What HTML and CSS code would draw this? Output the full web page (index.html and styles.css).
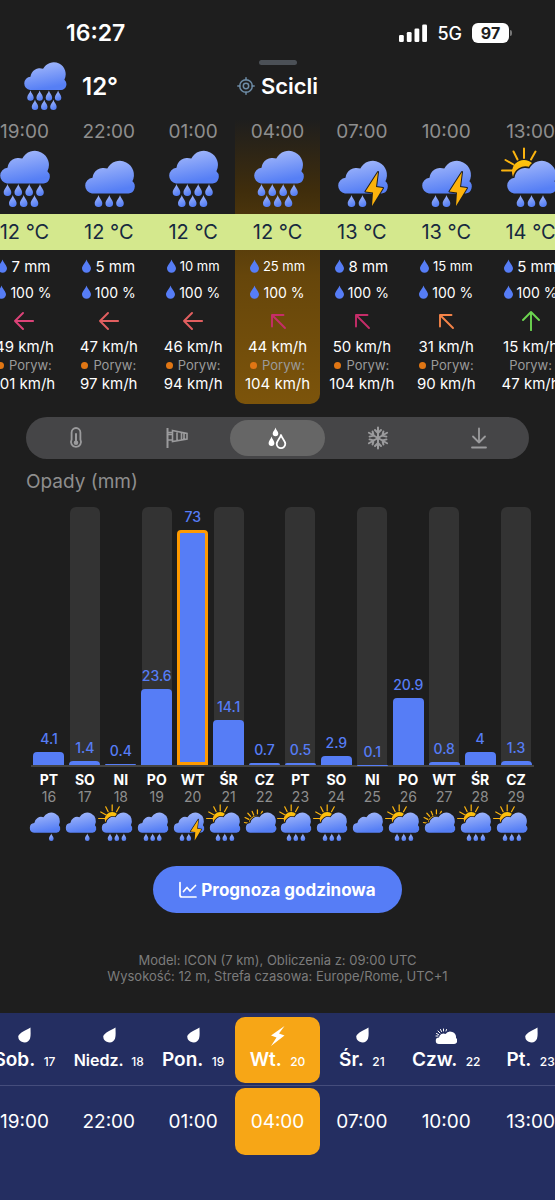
FILE: index.html
```
<!DOCTYPE html>
<html lang="pl">
<head>
	<meta charset="UTF-8">
	<meta name="viewport" content="width=device-width, initial-scale=1">
	<title>Scicli - prognoza pogody</title>
	<link rel="stylesheet" href="styles.css">
</head>
<body>
	<!-- icon sprite -->
	<svg class="sprite" aria-hidden="true">
		<defs>
			<linearGradient id="blue" x1="0" y1="0" x2="0.3" y2="1">
				<stop offset="0" stop-color="#abbefb"/>
				<stop offset="1" stop-color="#567ff5"/>
			</linearGradient>
			<linearGradient id="sunfill" x1="0" y1="0" x2="0" y2="1">
				<stop offset="0" stop-color="#fdc50c"/>
				<stop offset="1" stop-color="#fb9f10"/>
			</linearGradient>
			<path id="cloud" d="M8 33.5A7.9 7.9 0 0 1 8.5 17.8A11 11 0 0 1 23.3 8.6A13.8 13.8 0 1 1 48.4 21.3A7 7 0 0 1 44.5 33.5Z" fill="url(#blue)"/>
			<path id="drip" d="M0 0C.8 3.3 3.8 5.3 3.8 8.2A3.8 3.8 0 0 1-3.8 8.2C-3.8 5.3-.8 3.3 0 0Z" fill="url(#blue)"/>
			<g id="sun">
				<path d="M-4 10.5H7M-.5 0L7.500 4.500M7.500-8.500L11.500-.5M18-11.500V-2M29.500-8.500L25-.5" fill="none" stroke="#fbb40f" stroke-width="2" stroke-linecap="round"/>
				<circle cx="18" cy="12" r="12" fill="url(#sunfill)"/>
			</g>
			<path id="bolt" d="M41 12L28.500 31.500L36 32.500L35 46L46 28L39 27Z" fill="#fcb20c" stroke="#1e1e1e" stroke-width="2" stroke-linejoin="round" paint-order="stroke"/>
		</defs>
		<symbol id="w-heavy" viewBox="-5 -13 60 60">
			<use href="#cloud" y="-10"/>
			<use href="#drip" x="8.500" y="24"/><use href="#drip" x="19.300" y="24"/><use href="#drip" x="30.200" y="24"/><use href="#drip" x="41" y="24"/>
			<use href="#drip" x="13.800" y="35"/><use href="#drip" x="24.700" y="35"/><use href="#drip" x="35.500" y="35"/>
		</symbol>
		<symbol id="w-rain" viewBox="-5 -13 60 60">
			<use href="#cloud"/>
			<use href="#drip" x="14.500" y="35"/><use href="#drip" x="25.300" y="35"/><use href="#drip" x="36" y="35"/>
		</symbol>
		<symbol id="w-drizzle" viewBox="-5 -13 60 60">
			<use href="#cloud"/><use href="#drip" x="36" y="35"/>
		</symbol>
		<symbol id="w-cloud" viewBox="-5 -13 60 60">
			<use href="#cloud"/>
		</symbol>
		<symbol id="w-storm" viewBox="-5 -13 60 60">
			<use href="#cloud"/>
			<use href="#drip" x="14.500" y="35"/><use href="#drip" x="25.500" y="35"/>
			<use href="#bolt"/>
		</symbol>
		<symbol id="w-sunrain" viewBox="-5 -13 60 60">
			<use href="#sun"/>
			<use href="#cloud" stroke="#1e1e1e" stroke-width="3" paint-order="stroke"/>
			<use href="#drip" x="14.500" y="35"/><use href="#drip" x="25.500" y="35"/><use href="#drip" x="37" y="35"/>
		</symbol>
		<symbol id="w-suncloud" viewBox="-5 -13 60 60">
			<path d="M-1 17L4 18M0 9L6 12M4.500 2L9 7M11.500-1L14 5M20-3.500V3M28-1L26 3" fill="none" stroke="#fbb40f" stroke-width="2" stroke-linecap="round"/>
			<circle cx="18" cy="18" r="11" fill="none" stroke="#fbb40f" stroke-width="2"/>
			<use href="#cloud" stroke="#1e1e1e" stroke-width="3" paint-order="stroke"/>
		</symbol>
		<symbol id="drop" viewBox="0 0 9 14">
			<path d="M4.500 0.500C5.200 3.500 9 6.500 9 9.300A4.500 4.500 0 0 1 0 9.300C0 6.500 3.800 3.500 4.500 0.500Z" fill="#567df6"/>
		</symbol>
		<symbol id="a-left" viewBox="0 0 20 20">
			<path d="M19.200 10H1M9 2L1 10L9 18" fill="none" stroke="currentColor" stroke-width="1.900" stroke-linecap="round" stroke-linejoin="round"/>
		</symbol>
		<symbol id="a-nw" viewBox="0 0 20 20">
			<path d="M17 17L4 4M15.500 4H4V15.500" fill="none" stroke="currentColor" stroke-width="1.900" stroke-linecap="round" stroke-linejoin="round"/>
		</symbol>
		<symbol id="a-up" viewBox="0 0 20 20">
			<path d="M10 19.200V1M2 9L10 1L18 9" fill="none" stroke="currentColor" stroke-width="1.900" stroke-linecap="round" stroke-linejoin="round"/>
		</symbol>
		<symbol id="n-drop" viewBox="0 0 22 20">
			<path d="M17.500 1.500C17.500 6 18 9 17 12.800A6.200 6.200 0 0 1 5.200 10.500C6.500 6.500 12 5 17.500 1.500Z" fill="currentColor"/>
		</symbol>
		<symbol id="n-bolt" viewBox="0 0 22 20">
			<path d="M17.500 0L4 9.500L9.500 11.500L4 20L17.500 9.500L12 7.500Z" fill="currentColor"/>
		</symbol>
		<symbol id="n-cloud" viewBox="0 0 22 20">
			<path d="M1 10H3M1.500 7.500L3.500 8.500M3 5L5 7M5.500 3.500L6.500 5.500M8.500 3V5M11.500 3.500L11 5" stroke="currentColor" stroke-width="1" stroke-linecap="round"/>
			<path d="M4 18A3.200 3.200 0 0 1 4 11.500A4.500 4.500 0 0 1 10.500 8A5.800 5.800 0 0 1 21 12A3.300 3.300 0 0 1 19 18Z" fill="currentColor"/>
		</symbol>
	</svg>

	<div class="status">
		<span class="clock">16:27</span>
		<div class="system">
			<svg class="signal" viewBox="0 0 28 18" fill="#fff">
				<rect x="0" y="11" width="4.800" height="7" rx="1.300"/>
				<rect x="7.800" y="8" width="4.800" height="10" rx="1.300"/>
				<rect x="15.500" y="4.500" width="4.800" height="13.500" rx="1.300"/>
				<rect x="23.200" y="0.500" width="4.800" height="17.500" rx="1.300"/>
			</svg>
			<span class="network">5G</span>
			<span class="battery">97</span>
		</div>
	</div>

	<header class="header">
		<div class="now">
			<svg><use href="#w-heavy"/></svg>
			<span>12°</span>
		</div>
		<div class="place">
			<div class="handle"></div>
			<h1>
				<svg viewBox="0 0 18 18" fill="none" stroke="#6d8ca6" stroke-width="1.500" stroke-linecap="round">
					<circle cx="9" cy="9" r="6.300"/><circle cx="9" cy="9" r="2.700"/>
					<path d="M9 .8V3M9 15V17.200M.8 9H3M15 9H17.200"/>
				</svg>
				Scicli
			</h1>
		</div>
	</header>

	<section class="hours">
		<div class="hour">
			<div class="time">19:00</div>
			<svg class="weather"><use href="#w-heavy"/></svg>
			<div class="temp">12 °C</div>
			<div class="rain"><svg><use href="#drop"/></svg>7 mm</div>
			<div class="chance"><svg><use href="#drop"/></svg>100 %</div>
			<div class="wind pink"><svg><use href="#a-left"/></svg></div>
			<div class="speed">49 km/h</div>
			<div class="gust warn">Poryw:</div>
			<div class="speed low">101 km/h</div>
		</div>
		<div class="hour">
			<div class="time">22:00</div>
			<svg class="weather"><use href="#w-rain"/></svg>
			<div class="temp">12 °C</div>
			<div class="rain"><svg><use href="#drop"/></svg>5 mm</div>
			<div class="chance"><svg><use href="#drop"/></svg>100 %</div>
			<div class="wind red"><svg><use href="#a-left"/></svg></div>
			<div class="speed">47 km/h</div>
			<div class="gust warn">Poryw:</div>
			<div class="speed low">97 km/h</div>
		</div>
		<div class="hour">
			<div class="time">01:00</div>
			<svg class="weather"><use href="#w-heavy"/></svg>
			<div class="temp">12 °C</div>
			<div class="rain small"><svg><use href="#drop"/></svg>10 mm</div>
			<div class="chance"><svg><use href="#drop"/></svg>100 %</div>
			<div class="wind red"><svg><use href="#a-left"/></svg></div>
			<div class="speed">46 km/h</div>
			<div class="gust warn">Poryw:</div>
			<div class="speed low">94 km/h</div>
		</div>
		<div class="hour active">
			<div class="time">04:00</div>
			<svg class="weather"><use href="#w-heavy"/></svg>
			<div class="temp">12 °C</div>
			<div class="rain small"><svg><use href="#drop"/></svg>25 mm</div>
			<div class="chance"><svg><use href="#drop"/></svg>100 %</div>
			<div class="wind crimson"><svg><use href="#a-nw"/></svg></div>
			<div class="speed">44 km/h</div>
			<div class="gust warn">Poryw:</div>
			<div class="speed low">104 km/h</div>
		</div>
		<div class="hour">
			<div class="time">07:00</div>
			<svg class="weather"><use href="#w-storm"/></svg>
			<div class="temp">13 °C</div>
			<div class="rain"><svg><use href="#drop"/></svg>8 mm</div>
			<div class="chance"><svg><use href="#drop"/></svg>100 %</div>
			<div class="wind crimson"><svg><use href="#a-nw"/></svg></div>
			<div class="speed">50 km/h</div>
			<div class="gust warn">Poryw:</div>
			<div class="speed low">104 km/h</div>
		</div>
		<div class="hour">
			<div class="time">10:00</div>
			<svg class="weather"><use href="#w-storm"/></svg>
			<div class="temp">13 °C</div>
			<div class="rain small"><svg><use href="#drop"/></svg>15 mm</div>
			<div class="chance"><svg><use href="#drop"/></svg>100 %</div>
			<div class="wind orange"><svg><use href="#a-nw"/></svg></div>
			<div class="speed">31 km/h</div>
			<div class="gust warn">Poryw:</div>
			<div class="speed low">90 km/h</div>
		</div>
		<div class="hour">
			<div class="time">13:00</div>
			<svg class="weather"><use href="#w-sunrain"/></svg>
			<div class="temp">14 °C</div>
			<div class="rain"><svg><use href="#drop"/></svg>5 mm</div>
			<div class="chance"><svg><use href="#drop"/></svg>100 %</div>
			<div class="wind green"><svg><use href="#a-up"/></svg></div>
			<div class="speed">15 km/h</div>
			<div class="gust">Poryw:</div>
			<div class="speed low">47 km/h</div>
		</div>
	</section>

	<main class="main">
		<div class="tabs">
			<button type="button" aria-label="Temperatura">
				<svg viewBox="0 0 24 24" fill="none" stroke="currentColor" stroke-width="1.800">
					<path d="M7.600 13.500V6.400A4.400 4.400 0 0 1 16.400 6.400V13.500A5 5 0 1 1 7.600 13.500Z"/>
					<path d="M12 8V15" stroke-width="2" stroke-linecap="round"/><circle cx="12" cy="16.800" r="2.300" fill="currentColor" stroke="none"/>
				</svg>
			</button>
			<button type="button" aria-label="Wiatr">
				<svg viewBox="0 0 24 24" fill="none" stroke="currentColor" stroke-width="1.600">
					<path d="M2.500 2V22" stroke-width="2"/>
					<path d="M2.500 6.500H7M2.500 14H7M7.500 4.500L22 7.500V13L7.500 15.500ZM12 5.500V14.700M16.500 6.500V14M7.500 8.500H3M19 7V13.500"/>
				</svg>
			</button>
			<button type="button" class="on" aria-label="Opady">
				<svg viewBox="0 0 24 24">
					<path d="M10.500 1.500C11 4 13.300 5.500 13.300 7.500A2.800 2.800 0 0 1 7.700 7.500C7.700 5.500 10 4 10.500 1.500ZM6.500 10.500C7 13 9.400 14.800 9.400 17A2.900 2.900 0 0 1 3.600 17C3.600 14.800 6 13 6.500 10.500Z" fill="currentColor"/>
					<path d="M16 9C17 12.500 20.300 14.800 20.300 17.800A4.300 4.300 0 0 1 11.700 17.800C11.700 14.800 15 12.500 16 9Z" fill="none" stroke="currentColor" stroke-width="1.800" stroke-linejoin="round"/>
				</svg>
			</button>
			<button type="button" aria-label="Śnieg">
				<svg viewBox="0 0 24 24" fill="none" stroke="currentColor" stroke-width="2" stroke-linecap="round">
					<g id="arm"><path d="M12 1.500V22.500M9 4L12 7L15 4M9 20L12 17L15 20"/></g>
					<use href="#arm" transform="rotate(60 12 12)"/>
					<use href="#arm" transform="rotate(120 12 12)"/>
				</svg>
			</button>
			<button type="button" aria-label="Ciśnienie">
				<svg viewBox="0 0 24 24" fill="none" stroke="currentColor" stroke-width="1.800" stroke-linecap="round" stroke-linejoin="round">
					<path d="M12 2.500V16.500M6 10.500L12 16.500L18 10.500M5 21.500H19"/>
				</svg>
			</button>
		</div>

		<h2>Opady (mm)</h2>

		<div class="chart">
			<div class="slot"><span>4.1</span><div class="bar" style="height:5.1%"></div></div>
			<div class="slot"><span>1.4</span><div class="bar" style="height:1.7%"></div></div>
			<div class="slot"><span>0.4</span><div class="bar" style="height:0.5%"></div></div>
			<div class="slot"><span>23.6</span><div class="bar" style="height:29.4%"></div></div>
			<div class="slot"><span>73</span><div class="bar max" style="height:91%"></div></div>
			<div class="slot"><span>14.1</span><div class="bar" style="height:17.6%"></div></div>
			<div class="slot"><span>0.7</span><div class="bar" style="height:0.9%"></div></div>
			<div class="slot"><span>0.5</span><div class="bar" style="height:0.6%"></div></div>
			<div class="slot"><span>2.9</span><div class="bar" style="height:3.6%"></div></div>
			<div class="slot"><span>0.1</span><div class="bar" style="height:0.1%"></div></div>
			<div class="slot"><span>20.9</span><div class="bar" style="height:26.1%"></div></div>
			<div class="slot"><span>0.8</span><div class="bar" style="height:1%"></div></div>
			<div class="slot"><span>4</span><div class="bar" style="height:5%"></div></div>
			<div class="slot"><span>1.3</span><div class="bar" style="height:1.6%"></div></div>
		</div>
		<div class="days">
			<div class="day"><b>PT</b><i>16</i><svg><use href="#w-drizzle"/></svg></div>
			<div class="day"><b>SO</b><i>17</i><svg><use href="#w-drizzle"/></svg></div>
			<div class="day"><b>NI</b><i>18</i><svg><use href="#w-sunrain"/></svg></div>
			<div class="day"><b>PO</b><i>19</i><svg><use href="#w-rain"/></svg></div>
			<div class="day"><b>WT</b><i>20</i><svg><use href="#w-storm"/></svg></div>
			<div class="day"><b>ŚR</b><i>21</i><svg><use href="#w-sunrain"/></svg></div>
			<div class="day"><b>CZ</b><i>22</i><svg><use href="#w-suncloud"/></svg></div>
			<div class="day"><b>PT</b><i>23</i><svg><use href="#w-sunrain"/></svg></div>
			<div class="day"><b>SO</b><i>24</i><svg><use href="#w-sunrain"/></svg></div>
			<div class="day"><b>NI</b><i>25</i><svg><use href="#w-cloud"/></svg></div>
			<div class="day"><b>PO</b><i>26</i><svg><use href="#w-sunrain"/></svg></div>
			<div class="day"><b>WT</b><i>27</i><svg><use href="#w-suncloud"/></svg></div>
			<div class="day"><b>ŚR</b><i>28</i><svg><use href="#w-sunrain"/></svg></div>
			<div class="day"><b>CZ</b><i>29</i><svg><use href="#w-sunrain"/></svg></div>
		</div>

		<button type="button" class="hourly">
			<svg viewBox="0 0 18 18" fill="none" stroke="currentColor" stroke-width="1.700" stroke-linecap="round" stroke-linejoin="round">
				<path d="M1 1.500V14Q1 16 3 16H17M4.500 10.500L8 6.500L11 10L16.500 4.500"/>
			</svg>
			Prognoza godzinowa
		</button>

		<p class="info">Model: ICON (7 km), Obliczenia z: 09:00 UTC<br>Wysokość: 12 m, Strefa czasowa: Europe/Rome, UTC+1</p>
	</main>

	<nav class="picker">
		<div class="row dates">
			<button type="button"><svg><use href="#n-drop"/></svg><span>Sob. <small>17</small></span></button>
			<button type="button" class="long"><svg><use href="#n-drop"/></svg><span>Niedz. <small>18</small></span></button>
			<button type="button"><svg><use href="#n-drop"/></svg><span>Pon. <small>19</small></span></button>
			<button type="button" class="on"><svg><use href="#n-bolt"/></svg><span>Wt. <small>20</small></span></button>
			<button type="button"><svg><use href="#n-drop"/></svg><span>Śr. <small>21</small></span></button>
			<button type="button"><svg><use href="#n-cloud"/></svg><span>Czw. <small>22</small></span></button>
			<button type="button"><svg><use href="#n-drop"/></svg><span>Pt. <small>23</small></span></button>
		</div>
		<div class="row times">
			<button type="button">19:00</button>
			<button type="button">22:00</button>
			<button type="button">01:00</button>
			<button type="button" class="on">04:00</button>
			<button type="button">07:00</button>
			<button type="button">10:00</button>
			<button type="button">13:00</button>
		</div>
	</nav>
</body>
</html>
```

FILE: styles.css
```
*{ margin: 0; padding: 0; box-sizing: border-box; }
body{ min-height: 100vh; display: flex; flex-direction: column; background: #1e1e1e; color: #fff; font-family: Inter, "Liberation Sans", sans-serif; overflow-x: hidden; }
button{ border: 0; background: none; color: inherit; font: inherit; cursor: pointer; }
svg{ display: block; flex: none; }
.sprite{ position: absolute; width: 0; height: 0; }

/* status bar */
.status{ height: 60px; padding: 6px 46px 0 66px; display: flex; align-items: center; justify-content: space-between; }
.clock{ font-size: 23px; font-weight: 600; }
.system{ display: flex; align-items: center; gap: 10px; }
.signal{ width: 28px; height: 18px; }
.network{ font-size: 18px; font-weight: 500; }
.battery{ position: relative; width: 37px; height: 20px; border-radius: 6px; background: #fff; color: #1e1e1e; font-size: 16px; font-weight: 700; line-height: 20px; text-align: center; }
.battery::after{ content: ""; position: absolute; right: -3px; top: 7px; width: 2px; height: 6px; border-radius: 0 2px 2px 0; background: #777; }

/* header */
.header{ height: 59px; display: grid; grid-template-columns: 1fr auto 1fr; align-items: start; }
.now{ height: 52px; padding-left: 19px; display: flex; align-items: center; gap: 12px; font-size: 24px; font-weight: 600; }
.now svg{ width: 51px; height: 51px; margin-bottom: 4px; }
.handle{ width: 38px; height: 5px; margin: 0 auto 7px; border-radius: 3px; background: #4b5056; }
.place h1{ display: flex; align-items: center; gap: 6px; font-size: 22px; font-weight: 600; line-height: 28px; }
.place svg{ width: 18px; height: 18px; }

/* hourly strip, runs past both edges */
.hours{ display: flex; justify-content: center; overflow: hidden; }
.hour{ flex: 0 0 15.2%; padding-bottom: 11px; text-align: center; white-space: nowrap; }
.hour.active{ border-radius: 0 0 10px 10px; background: linear-gradient(#1e1e1e, #3f2d0c 25%, #66460b 55%, #7c540b); }
.time{ font-size: 19px; line-height: 26px; color: #8e8e8e; }
.weather{ width: 60px; height: 60px; margin: 2px auto 7px; }
.temp{ height: 36px; margin-bottom: 3px; background: #d4e88d; color: #17293f; font-size: 20px; line-height: 36px; }
.rain, .chance{ height: 26px; display: flex; align-items: center; justify-content: center; gap: 4px; }
.rain svg, .chance svg{ width: 9px; height: 14px; }
.rain{ font-size: 15px; }
.rain.small{ font-size: 13px; }
.chance{ font-size: 14px; }
.wind{ height: 32px; display: flex; align-items: center; justify-content: center; }
.wind svg{ width: 20px; height: 20px; }
.pink{ color: #dc4378; }
.red{ color: #e25f60; }
.crimson{ color: #c62d69; }
.orange{ color: #f48348; }
.green{ color: #6cd650; }
.speed{ font-size: 15px; line-height: 20px; }
.speed.low{ line-height: 19px; }
.gust{ font-size: 13px; line-height: 17px; color: #9b9b9b; }
.gust.warn::before{ content: ""; display: inline-block; width: 7px; height: 7px; margin-right: 5px; border-radius: 50%; background: #e07614; vertical-align: 1px; }

/* tabs */
.main{ padding: 0 26px; }
.tabs{ height: 42px; margin-top: 13px; display: flex; border-radius: 21px; background: #454547; }
.tabs button{ flex: 1; margin: 3px; display: flex; align-items: center; justify-content: center; border-radius: 18px; color: #9b9b9d; }
.tabs .on{ background: #666; color: #fff; }
.tabs svg{ width: 24px; height: 24px; }
.main h2{ margin: 11px 0 13px; font-size: 19px; font-weight: 400; line-height: 24px; color: #8e8e8e; }

/* precipitation chart */
.chart, .days{ display: grid; grid-template-columns: repeat(14, minmax(0, 1fr)); margin: 0 -5px 0 5px; }
.chart{ height: 260px; border-bottom: 2px solid #444; }
.slot{ min-height: 0; margin: 0 3px; display: flex; flex-direction: column; justify-content: flex-end; align-items: center; border-radius: 6px 6px 0 0; }
.slot:nth-child(even){ background: #333; }
.slot span{ margin-bottom: 5px; color: #567df6; font-size: 14px; font-weight: 500; line-height: 17px; }
.bar{ width: 31px; margin: 0 -1px; flex: none; border-radius: 4px 4px 0 0; background: #567df6; }
.bar.max{ border: 3px solid #ff9a00; }
.days{ padding-top: 4px; }
.day{ display: flex; flex-direction: column; align-items: center; font-size: 14px; line-height: 17px; }
.day b{ font-weight: 700; }
.day i{ font-style: normal; color: #8e8e8e; }
.day svg{ width: 37px; height: 37px; margin: -1px 9px 0 0; }

.hourly{ height: 47px; margin: 25px auto 39px; padding: 0 26px; display: flex; align-items: center; gap: 4px; border-radius: 24px; background: #567df6; font-size: 17px; font-weight: 700; }
.hourly svg{ width: 18px; height: 18px; }
.info{ padding-bottom: 29px; color: #7c7c7c; font-size: 13px; line-height: 16px; text-align: center; }

/* date and time picker */
.picker{ flex: 1; padding-top: 4px; background: #242e61; }
.row{ display: flex; justify-content: center; overflow: hidden; }
.row button{ flex: 0 0 15.2%; border-radius: 10px; white-space: nowrap; }
.row .on{ background: #f7a616; }
.dates{ padding-bottom: 2px; border-bottom: 1px solid #454d7c; }
.dates button{ height: 66px; display: flex; flex-direction: column; align-items: center; justify-content: center; gap: 2px; font-size: 19px; font-weight: 600; line-height: 24px; }
.dates .long{ font-size: 16px; }
.dates svg{ width: 22px; height: 20px; }
.dates small{ margin-left: 4px; font-size: 12px; font-weight: 500; }
.times{ padding-top: 2px; }
.times button{ height: 67px; font-size: 19px; }
```
